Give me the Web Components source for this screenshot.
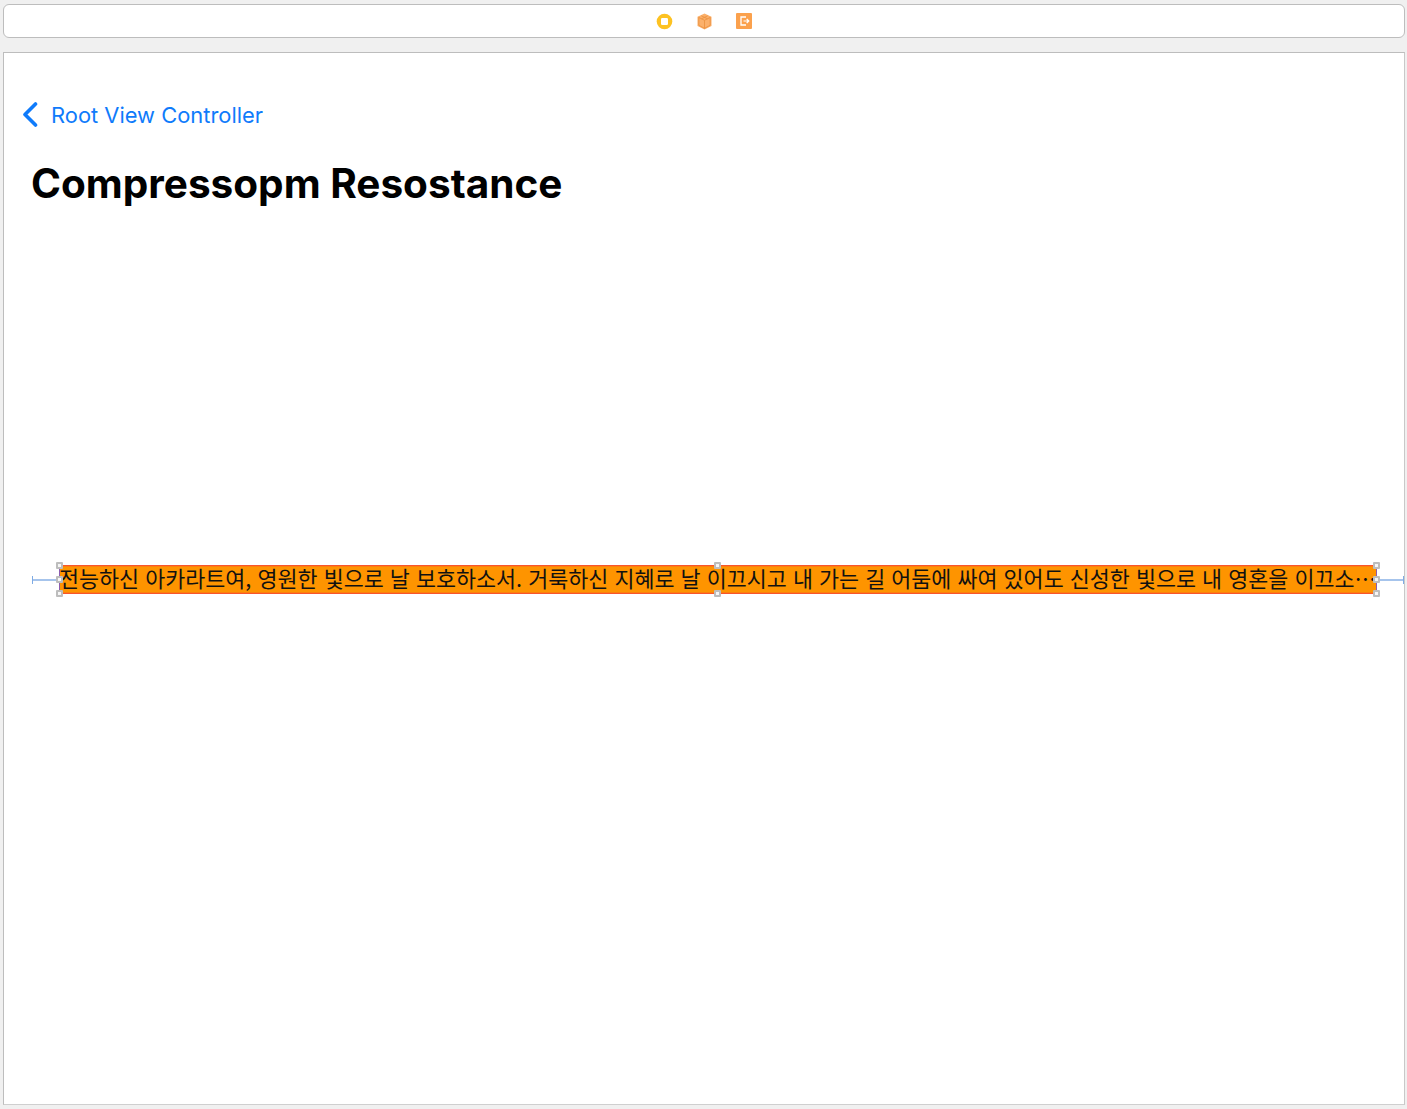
<!DOCTYPE html>
<html lang="ko">
<head>
<meta charset="utf-8">
<title>Storyboard</title>
<style>
  html, body { margin: 0; height: 100%; background: #f0f0f0; }
  body {
    box-sizing: border-box;
    height: 1109px;
    padding: 4px 2px 4px 3px;
    display: flex;
    flex-direction: column;
    gap: 14px;
    overflow: hidden;
    font-family: "Inter", "Liberation Sans", "Noto Sans CJK KR", sans-serif;
  }
</style>
</head>
<body>
<scene-dock>
  <svg slot="icons" width="17" height="17" viewBox="0 0 17 17">
    <circle cx="8.5" cy="8.5" r="7.8" fill="#fdc222"/>
    <rect x="5" y="5" width="7" height="7" rx="1.200" fill="#fff"/>
  </svg>
  <svg slot="icons" width="15" height="17" viewBox="0 0 15 17">
    <path d="M7.500 .5 14.500 3.800V13L7.500 16.500 .5 13V3.800Z" fill="#fbb06a"/>
    <path d="M1.500 4.300 7.500 7.300 13.500 4.300M7.500 7.300V15.500M4.300 2.800 10.500 5.800M10.700 2.800 4.500 5.800M1.800 4.500V12.300L7.500 15.300 13.200 12.300V4.500" fill="none" stroke="#ea8f3e" stroke-width=".8"/>
  </svg>
  <svg slot="icons" width="16" height="16" viewBox="0 0 16 16">
    <rect width="16" height="16" rx="1" fill="#fba14d"/>
    <path d="M10 4H5V12H10" fill="none" stroke="#fff" stroke-width="1.300"/>
    <path d="M7.500 8H12.500M10.700 6 12.800 8 10.700 10" fill="none" stroke="#fff" stroke-width="1.200"/>
  </svg>
</scene-dock>
<scene-canvas>
  <nav-back>Root View Controller</nav-back>
  <large-title>Compressopm Resostance</large-title>
  <selected-label>전능하신 아카라트여, 영원한 빛으로 날 보호하소서. 거룩하신 지혜로 날 이끄시고 내 가는 길 어둠에 싸여 있어도 신성한 빛으로 내 영혼을 이끄소⋯</selected-label>
</scene-canvas>
<script>
class SceneDock extends HTMLElement {
  constructor() {
    super();
    this.attachShadow({mode: 'open'}).innerHTML = `
      <style>
        :host {
          display: flex;
          justify-content: center;
          align-items: center;
          gap: 24px;
          box-sizing: border-box;
          height: 34px;
          flex: none;
          background: #fff;
          border: 1px solid #bdbdbd;
          border-radius: 6px;
        }
      </style>
      <slot name="icons"></slot>
    `;
  }
}

class SceneCanvas extends HTMLElement {
  constructor() {
    super();
    this.attachShadow({mode: 'open'}).innerHTML = `
      <style>
        :host {
          display: flex;
          flex-direction: column;
          box-sizing: border-box;
          flex: 1;
          min-height: 0;
          background: #fff;
          border: 1px solid #bdbdbd;
          border-bottom-color: #cfcfcf;
          border-right-color: #c8c8c8;
        }
      </style>
      <slot></slot>
    `;
  }
}

class NavBack extends HTMLElement {
  constructor() {
    super();
    this.attachShadow({mode: 'open'}).innerHTML = `
      <style>
        :host {
          display: flex;
          align-items: center;
          gap: 12px;
          height: 28px;
          margin: 48px 0 0 17px;
          color: #0f7bfb;
          font: 400 21.900px "Inter", "Liberation Sans", sans-serif;
        }
        svg { flex: none; }
      </style>
      <svg width="18" height="26" viewBox="0 0 18 26">
        <path d="M14.500 2 4 12.500 14.500 23" fill="none" stroke="#0f7bfb" stroke-width="3.600" stroke-linecap="round" stroke-linejoin="round"/>
      </svg>
      <span><slot></slot></span>
    `;
  }
}

class LargeTitle extends HTMLElement {
  constructor() {
    super();
    this.attachShadow({mode: 'open'}).innerHTML = `
      <style>
        :host {
          display: block;
          margin: 30px 0 0 27px;
          height: 50px;
          color: #000;
          font: 700 40.500px/50px "Inter", "Liberation Sans", sans-serif;
          white-space: nowrap;
        }
      </style>
      <slot></slot>
    `;
  }
}

class SelectedLabel extends HTMLElement {
  constructor() {
    super();
    this.attachShadow({mode: 'open'}).innerHTML = `
      <style>
        :host {
          display: block;
          position: relative;
          box-sizing: border-box;
          height: 29px;
          margin: 356px 27px 0 55px;
          background: #fe9400;
          border: 1px solid #f8552c;
          border-left-color: #8a5cb0;
          border-right-color: #8a5cb0;
          box-shadow: inset 0 1px 0 rgba(250, 90, 40, .35), inset 0 -1px 0 rgba(250, 90, 40, .35);
          color: #111;
          font: 400 21.770px/23px "Noto Sans CJK KR", "Noto Sans", sans-serif;
          white-space: nowrap;
        }
        .text { display: block; overflow-x: clip; margin-left: -1px; }
        .handle {
          position: absolute;
          box-sizing: border-box;
          width: 7px;
          height: 7px;
          background: #f6f6f6;
          border: 2px solid #bdbdbd;
          border-radius: 1px;
        }
        .left { left: -4px; }
        .center { left: calc(50% - 4.500px); }
        .right { right: -4px; }
        .top { top: -4px; }
        .middle { top: calc(50% - 3.500px); }
        .bottom { bottom: -4px; }
        .guide {
          position: absolute;
          top: calc(50% - 1px);
          height: 2px;
          background: #a6c4ec;
        }
        .guide.l { left: -27px; width: 24px; }
        .guide.r { left: calc(100% + 4px); width: 24px; }
        .cap {
          position: absolute;
          top: calc(50% - 4px);
          width: 1px;
          height: 8px;
          background: #7fabe4;
        }
        .cap.l { left: -28px; }
        .cap.r { left: calc(100% + 27px); }
      </style>
      <span class="text"><slot></slot></span>
      <i class="guide l"></i><i class="cap l"></i>
      <i class="guide r"></i><i class="cap r"></i>
      <i class="handle left top"></i><i class="handle center top"></i><i class="handle right top"></i>
      <i class="handle left middle"></i><i class="handle right middle"></i>
      <i class="handle left bottom"></i><i class="handle center bottom"></i><i class="handle right bottom"></i>
    `;
  }
}

customElements.define('scene-dock', SceneDock);
customElements.define('scene-canvas', SceneCanvas);
customElements.define('nav-back', NavBack);
customElements.define('large-title', LargeTitle);
customElements.define('selected-label', SelectedLabel);
</script>
</body>
</html>
